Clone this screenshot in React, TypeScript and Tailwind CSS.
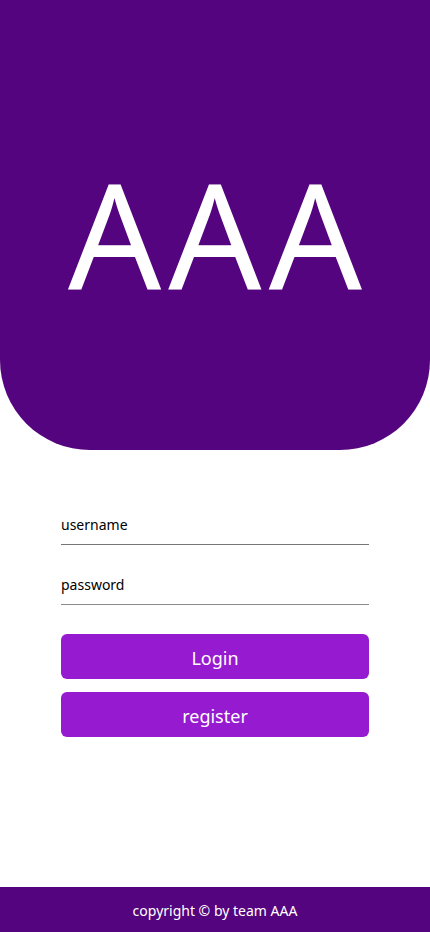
export default function App() {
  return (
    <div
      className="min-h-screen flex flex-col bg-white"
      style={{ fontFamily: '"Noto Sans", "Open Sans", sans-serif' }}
    >
      {/* ── Header ── */}
      <header className="h-[450px] bg-[#54047e] rounded-b-[90px] flex items-center justify-center">
        <h1 className="text-white text-[146px] leading-none font-normal tracking-[7px] pl-[7px] mt-[16px]">
          AAA
        </h1>
      </header>

      {/* ── Form ── */}
      <form className="mt-[55px] mx-[61px] flex flex-col" onSubmit={(e) => e.preventDefault()}>
        <input
          type="text"
          placeholder="username"
          className="h-[40px] border-b border-[#767676] text-[14px] text-black placeholder:text-black outline-none"
        />
        <input
          type="password"
          placeholder="password"
          className="mt-[20px] h-[40px] border-b border-[#8a8a8a] text-[14px] text-black placeholder:text-black outline-none"
        />
        <button
          type="submit"
          className="mt-[29px] h-[45px] pt-[3px] rounded-md bg-[#961ad0] text-white text-[18px]"
        >
          Login
        </button>
        <button
          type="button"
          className="mt-[13px] h-[45px] pt-[3px] rounded-md bg-[#961ad0] text-white text-[18px]"
        >
          register
        </button>
      </form>

      {/* ── Footer ── */}
      <footer className="mt-auto h-[45px] bg-[#54047e] flex items-center justify-center pt-[2px]">
        <p className="text-white text-[14px]">copyright © by team AAA</p>
      </footer>
    </div>
  );
}
